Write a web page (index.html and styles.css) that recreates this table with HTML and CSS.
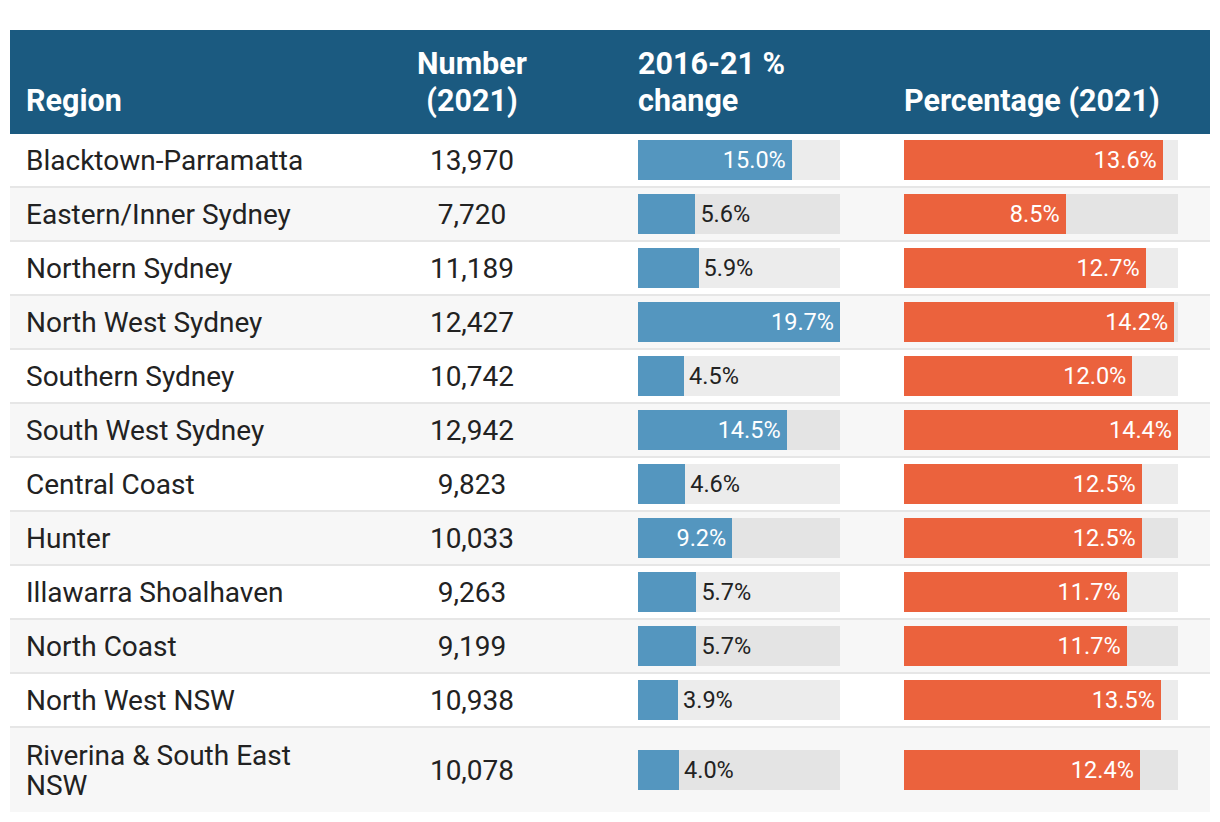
FILE: index.html
```html
<!DOCTYPE html>
<html>
<head>
<meta charset="utf-8">
<link rel="stylesheet" href="styles.css">
</head>
<body>
<div class="table">
  <div class="row head">
    <div class="cell region">Region</div>
    <div class="cell num">Number<br>(2021)</div>
    <div class="cell">2016-21 %<br>change</div>
    <div class="cell">Percentage (2021)</div>
  </div>

  <div class="row">
    <div class="cell region">Blacktown-Parramatta</div>
    <div class="cell num">13,970</div>
    <div class="cell bar-cell"><div class="track t-change"><div class="fill blue" style="width:153.8px"><span class="in">15.0%</span></div></div></div>
    <div class="cell bar-cell"><div class="track t-pct"><div class="fill orange" style="width:258.8px"><span class="in">13.6%</span></div></div></div>
  </div>
  <div class="row alt">
    <div class="cell region">Eastern/Inner Sydney</div>
    <div class="cell num">7,720</div>
    <div class="cell bar-cell"><div class="track t-change"><div class="fill blue" style="width:57.4px"></div><span class="out">5.6%</span></div></div>
    <div class="cell bar-cell"><div class="track t-pct"><div class="fill orange" style="width:161.7px"><span class="in">8.5%</span></div></div></div>
  </div>
  <div class="row">
    <div class="cell region">Northern Sydney</div>
    <div class="cell num">11,189</div>
    <div class="cell bar-cell"><div class="track t-change"><div class="fill blue" style="width:60.5px"></div><span class="out">5.9%</span></div></div>
    <div class="cell bar-cell"><div class="track t-pct"><div class="fill orange" style="width:241.6px"><span class="in">12.7%</span></div></div></div>
  </div>
  <div class="row alt">
    <div class="cell region">North West Sydney</div>
    <div class="cell num">12,427</div>
    <div class="cell bar-cell"><div class="track t-change"><div class="fill blue" style="width:202px"><span class="in">19.7%</span></div></div></div>
    <div class="cell bar-cell"><div class="track t-pct"><div class="fill orange" style="width:270.2px"><span class="in">14.2%</span></div></div></div>
  </div>
  <div class="row">
    <div class="cell region">Southern Sydney</div>
    <div class="cell num">10,742</div>
    <div class="cell bar-cell"><div class="track t-change"><div class="fill blue" style="width:46.1px"></div><span class="out">4.5%</span></div></div>
    <div class="cell bar-cell"><div class="track t-pct"><div class="fill orange" style="width:228.3px"><span class="in">12.0%</span></div></div></div>
  </div>
  <div class="row alt">
    <div class="cell region">South West Sydney</div>
    <div class="cell num">12,942</div>
    <div class="cell bar-cell"><div class="track t-change"><div class="fill blue" style="width:148.7px"><span class="in">14.5%</span></div></div></div>
    <div class="cell bar-cell"><div class="track t-pct"><div class="fill orange" style="width:274px"><span class="in">14.4%</span></div></div></div>
  </div>
  <div class="row">
    <div class="cell region">Central Coast</div>
    <div class="cell num">9,823</div>
    <div class="cell bar-cell"><div class="track t-change"><div class="fill blue" style="width:47.2px"></div><span class="out">4.6%</span></div></div>
    <div class="cell bar-cell"><div class="track t-pct"><div class="fill orange" style="width:237.8px"><span class="in">12.5%</span></div></div></div>
  </div>
  <div class="row alt">
    <div class="cell region">Hunter</div>
    <div class="cell num">10,033</div>
    <div class="cell bar-cell"><div class="track t-change"><div class="fill blue" style="width:94.3px"><span class="in">9.2%</span></div></div></div>
    <div class="cell bar-cell"><div class="track t-pct"><div class="fill orange" style="width:237.8px"><span class="in">12.5%</span></div></div></div>
  </div>
  <div class="row">
    <div class="cell region">Illawarra Shoalhaven</div>
    <div class="cell num">9,263</div>
    <div class="cell bar-cell"><div class="track t-change"><div class="fill blue" style="width:58.4px"></div><span class="out">5.7%</span></div></div>
    <div class="cell bar-cell"><div class="track t-pct"><div class="fill orange" style="width:222.6px"><span class="in">11.7%</span></div></div></div>
  </div>
  <div class="row alt">
    <div class="cell region">North Coast</div>
    <div class="cell num">9,199</div>
    <div class="cell bar-cell"><div class="track t-change"><div class="fill blue" style="width:58.4px"></div><span class="out">5.7%</span></div></div>
    <div class="cell bar-cell"><div class="track t-pct"><div class="fill orange" style="width:222.6px"><span class="in">11.7%</span></div></div></div>
  </div>
  <div class="row">
    <div class="cell region">North West NSW</div>
    <div class="cell num">10,938</div>
    <div class="cell bar-cell"><div class="track t-change"><div class="fill blue" style="width:40px"></div><span class="out">3.9%</span></div></div>
    <div class="cell bar-cell"><div class="track t-pct"><div class="fill orange" style="width:256.9px"><span class="in">13.5%</span></div></div></div>
  </div>
  <div class="row alt last">
    <div class="cell region">Riverina &amp; South East<br>NSW</div>
    <div class="cell num">10,078</div>
    <div class="cell bar-cell"><div class="track t-change"><div class="fill blue" style="width:41px"></div><span class="out">4.0%</span></div></div>
    <div class="cell bar-cell"><div class="track t-pct"><div class="fill orange" style="width:235.9px"><span class="in">12.4%</span></div></div></div>
  </div>
</div>
</body>
</html>
```
FILE: styles.css
```css
html, body {
  margin: 0;
  padding: 0;
  background: #ffffff;
}
body {
  padding: 30px 10px 0 10px;
  font-family: Roboto, "Liberation Sans", sans-serif;
  color: #222222;
}
.table {
  width: 1200px;
}
.row {
  display: grid;
  grid-template-columns: 313px 298px 266px 323px;
  align-items: center;
  background: #ffffff;
  border-bottom: 2px solid #e6e6e6;
}
.row.alt {
  background: #f7f7f7;
}
.row.last {
  border-bottom: none;
  padding: 1px 0;
}
.cell {
  padding: 12px 17px 10px 17px;
  font-size: 28px;
  line-height: 30px;
}
.cell.region {
  padding-left: 16px;
}
.cell.num {
  text-align: center;
}
.row.head {
  background: #1b5a80;
  color: #ffffff;
  align-items: end;
  border-bottom: none;
  height: 104px;
}
.row.head .cell {
  font-weight: 700;
  font-size: 30.5px;
  line-height: 37px;
  padding: 0 17px 15px 17px;
}
.row.head .cell.region {
  padding-left: 16px;
}
.row .bar-cell {
  padding: 6px 17px;
}
.track {
  position: relative;
  display: flex;
  align-items: center;
  height: 40px;
  background: rgba(0, 0, 0, 0.075);
}
.t-change { width: 202px; }
.t-pct { width: 274px; }
.fill {
  height: 40px;
  display: flex;
  align-items: center;
  justify-content: flex-end;
  flex: none;
}
.fill.blue { background: #5496bf; }
.fill.orange { background: #eb623d; }
.in {
  color: #ffffff;
  font-size: 23.5px;
  padding-right: 6px;
  white-space: nowrap;
}
.out {
  color: #222222;
  font-size: 23.5px;
  padding-left: 5px;
  white-space: nowrap;
}
```
